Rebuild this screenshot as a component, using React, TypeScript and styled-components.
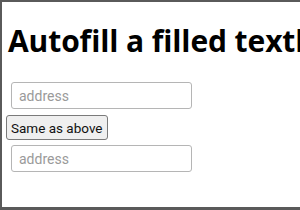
import React from "react";
import styled, { createGlobalStyle } from "styled-components";

const Global = createGlobalStyle`
  html, body { margin: 0; padding: 0; background: #fff; }
  body { width: 300px; height: 210px; overflow: hidden; }
`;

const Frame = styled.div`
  box-sizing: border-box;
  width: 300px;
  height: 210px;
  border-top: 2px solid #5a5a5a;
  border-left: 2px solid #5a5a5a;
  border-bottom: 3px solid #5a5a5a;
  overflow: hidden;
  background: #fff;
  display: flex;
  flex-direction: column;
  align-items: flex-start;
  padding: 0 0 0 3px;
`;

const Title = styled.h1`
  margin: 19px 0 21px 3px;
  font-family: "Open Sans", "DejaVu Sans", sans-serif;
  font-weight: 700;
  font-size: 30px;
  line-height: 40px;
  letter-spacing: -0.1px;
  color: #000;
  white-space: nowrap;
`;

const Field = styled.input`
  box-sizing: border-box;
  width: 181px;
  height: 27px;
  margin: 0 0 0 6px;
  padding: 0 7px;
  border: 1px solid #b5b5b5;
  border-radius: 3px;
  font-family: Roboto, "Liberation Sans", sans-serif;
  font-size: 14px;
  color: #222;
  background: #fff;
  outline: none;
  &::placeholder { color: #9a9a9a; }
`;

const Button = styled.button`
  box-sizing: border-box;
  margin: 6px 0 5px 1px;
  height: 25px;
  padding: 0 4px;
  border: 1px solid #7a7a7a;
  border-radius: 3px;
  background: #efefef;
  font-family: Roboto, "Liberation Sans", sans-serif;
  font-size: 13.5px;
  color: #111;
`;

export default function App() {
  return (
    <>
      <Global />
      <Frame>
        <Title>Autofill a filled textbox</Title>
        <Field placeholder="address" />
        <Button>Same as above</Button>
        <Field placeholder="address" />
      </Frame>
    </>
  );
}
